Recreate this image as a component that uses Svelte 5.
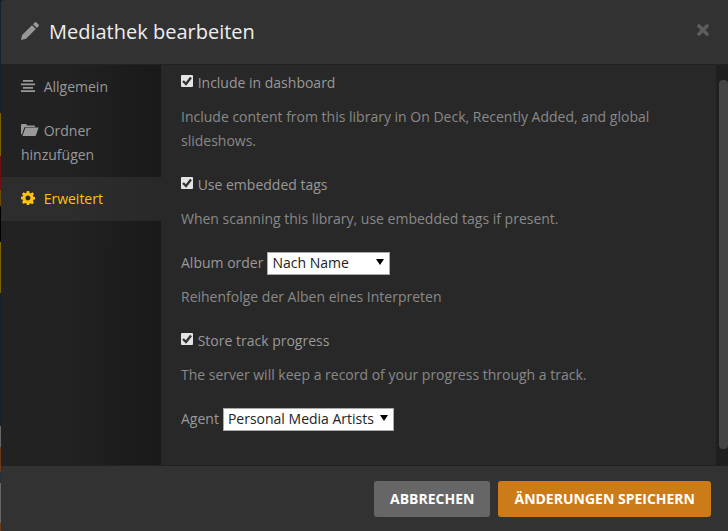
<script lang="ts">
  let active = $state('advanced');
  let dashboard = $state(true);
  let embeddedTags = $state(true);
  let trackProgress = $state(true);
  let albumOrder = $state('name');
  let agent = $state('personal');
</script>

<div class="backdrop">
  <div class="modal" role="dialog" aria-labelledby="modal-title">
    <header class="modal-header">
      <svg class="pencil" viewBox="0 0 18 18" width="18" height="18" aria-hidden="true">
        <path d="M0 18l1.2-5L11 3.2 14.8 7 5 16.8zM12 2.2l1.7-1.7q.9-.8 1.8 0l2 2q.8.9 0 1.8L15.8 6z" />
        <path d="M3.6 13.6L11.6 5.6" stroke="#888" stroke-width="0.6" />
      </svg>
      <h4 id="modal-title">Mediathek bearbeiten</h4>
      <button class="close" type="button" aria-label="Schließen">
        <svg viewBox="0 0 12 12" width="12" height="12" aria-hidden="true">
          <path d="M2 2l8 8M10 2l-8 8" stroke="currentColor" stroke-width="3.6" stroke-linecap="round" />
        </svg>
      </button>
    </header>

    <div class="modal-body">
      <nav class="sidebar">
        <a href="#general" class:selected={active === 'general'} onclick={() => (active = 'general')}>
          <svg viewBox="0 0 18 14" width="18" height="14" aria-hidden="true">
            <path d="M2 .9h10v1.800H2zM0 4.400h14v1.800H0zM2 7.900h10v1.800H2zM0 11.200h14v1.800H0z" />
          </svg>
          Allgemein
        </a>
        <a href="#folders" class:selected={active === 'folders'} onclick={() => (active = 'folders')}>
          <svg viewBox="0 0 18 14" width="18" height="14" aria-hidden="true">
            <path d="M0 11V2q0-1 1-1h4l1.5 1.5H13q1 0 1 1V4H4.3q-.8 0-1.1.8L1 11.5z" />
            <path d="M4.4 4.4H17.6L15 12.2q-.2.8-1 .8H1.4z" />
          </svg>
          Ordner hinzufügen
        </a>
        <a href="#advanced" class:selected={active === 'advanced'} onclick={() => (active = 'advanced')}>
          <svg viewBox="0 0 18 14" width="18" height="14" aria-hidden="true">
            <path
              fill-rule="evenodd"
              d="M5.8 0h2.4l.4 1.9 1.1.5 1.6-1.1 1.7 1.7-1.1 1.6.5 1.1 1.6.3v2.4l-1.7.4-.4 1.1 1 1.6-1.7 1.7-1.6-1-1.1.5L8.2 14H5.8l-.4-1.7-1.1-.4-1.6 1L1 11.2l1-1.5-.4-1.2L0 8.2V5.8l1.7-.3.4-1.1L1 2.9l1.7-1.7 1.6 1.1 1.1-.5zM7 4.5a2.5 2.5 0 1 0 0 5 2.5 2.5 0 0 0 0-5z"
            />
          </svg>
          Erweitert
        </a>
      </nav>

      <form class="settings" id="settings">
        <div class="group">
          <label><input type="checkbox" bind:checked={dashboard} /> Include in dashboard</label>
          <p>Include content from this library in On Deck, Recently Added, and global slideshows.</p>
        </div>
        <div class="group">
          <label><input type="checkbox" bind:checked={embeddedTags} /> Use embedded tags</label>
          <p>When scanning this library, use embedded tags if present.</p>
        </div>
        <div class="group">
          <div class="field">
            <label for="album-order">Album order</label>
            <span class="select">
              <select id="album-order" class="order" bind:value={albumOrder}>
                <option value="name">Nach Name</option>
                <option value="year">Nach Jahr</option>
              </select>
            </span>
          </div>
          <p>Reihenfolge der Alben eines Interpreten</p>
        </div>
        <div class="group">
          <label><input type="checkbox" bind:checked={trackProgress} /> Store track progress</label>
          <p>The server will keep a record of your progress through a track.</p>
        </div>
        <div class="group">
          <div class="field">
            <label for="agent">Agent</label>
            <span class="select">
              <select id="agent" bind:value={agent}>
                <option value="personal">Personal Media Artists</option>
              </select>
            </span>
          </div>
        </div>
      </form>

      <div class="scrollbar"><div class="thumb"></div></div>
    </div>

    <footer class="modal-footer">
      <button class="btn" type="button">Abbrechen</button>
      <button class="btn btn-primary" type="submit" form="settings">Änderungen speichern</button>
    </footer>
  </div>
</div>

<style>
  :global(body) {
    background: #323232;
  }

  /* a sliver of the dimmed library shows left of the dialog */
  .backdrop {
    padding-left: 1px;
    font: 14px/24px 'Open Sans', sans-serif;
    color: #999;
    background: linear-gradient(
      #17212a 0 113px,
      #7d5f00 113px 156px,
      #6d1010 156px 190px,
      #6d4a00 190px 206px,
      #000 206px 242px,
      #7d6400 242px 293px,
      #17212a 293px 426px,
      #666 426px 447px,
      #6b3a14 447px 472px,
      #263038 472px 483px,
      #666 483px 523px,
      #6b3a14 523px
    );
  }

  .modal {
    background: #282828;
    border-radius: 4px 0 0 0;
    overflow: hidden;
  }

  .modal-header {
    display: flex;
    align-items: center;
    height: 64px;
    padding: 0 19px 0 20px;
    background: #323232;
    border-bottom: 1px solid #222;
  }

  .modal-header h4 {
    flex: 1;
    margin: 0 0 0 10px;
    font-size: 20px;
    font-weight: 400;
    color: #eee;
  }

  svg {
    fill: currentColor;
  }

  .pencil {
    margin-bottom: 2px;
  }

  .close {
    display: flex;
    padding: 0;
    margin-bottom: 4px;
    border: 0;
    background: none;
    color: #5d5d5d;
    cursor: pointer;
  }

  .modal-body {
    display: flex;
  }

  .sidebar {
    flex: none;
    width: 160px;
    background: linear-gradient(to right, #222 40%, #191919);
  }

  .sidebar a {
    display: block;
    padding: 10px 20px;
    color: #999;
    text-decoration: none;
  }

  .sidebar a.selected {
    color: #ffc20e;
    background: linear-gradient(to right, #2d2d2d 40%, #282828);
  }

  .sidebar svg {
    margin-right: 1px;
    vertical-align: -1px;
  }

  .settings {
    flex: 1;
    padding: 6px 20px 34px;
  }

  .group + .group {
    margin-top: 20px;
  }

  .group > label {
    display: block;
  }

  .settings p {
    margin: 10px 0 0;
    color: #888;
  }

  input {
    appearance: none;
    width: 12px;
    height: 12px;
    margin: 0 1px 0 0;
    border-radius: 1px;
    background: #e4e4e4;
    vertical-align: 1px;
  }

  input:checked {
    background: #e4e4e4
      url("data:image/svg+xml,%3Csvg xmlns='http://www.w3.org/2000/svg' viewBox='0 0 12 12'%3E%3Cpath d='M2 6l3 3L10 2.5' fill='none' stroke='%23333' stroke-width='2.4'/%3E%3C/svg%3E");
  }

  .field {
    display: flex;
    align-items: center;
    gap: 4px;
  }

  .select {
    display: grid;
    align-items: center;
  }

  .select::after {
    content: '';
    grid-area: 1 / 1;
    justify-self: end;
    margin: 0 6px 2px 0;
    border: 4px solid transparent;
    border-top: 6px solid #000;
    border-bottom: 0;
    pointer-events: none;
  }

  select {
    grid-area: 1 / 1;
    appearance: none;
    height: 23px;
    padding: 0 18px 2px 4px;
    border: 1px solid #a9a9a9;
    border-radius: 0;
    background: #fff;
    color: #222;
    font: inherit;
    line-height: 19px;
  }

  .order {
    width: 123px;
  }

  .scrollbar {
    display: flex;
    flex: none;
    width: 9px;
    padding: 15px 0 16px 3px;
    background: #1f1f1f;
  }

  .thumb {
    flex: 1;
    border-radius: 4px;
    background: #444;
  }

  .modal-footer {
    display: flex;
    justify-content: flex-end;
    gap: 8px;
    padding: 15px 17px 14px;
    background: #323232;
    border-top: 1px solid #222;
  }

  .btn {
    padding: 6px 16px;
    border: 0;
    border-radius: 3px;
    background: #666;
    color: #fff;
    font: inherit;
    font-weight: 700;
    text-transform: uppercase;
    cursor: pointer;
  }

  .btn-primary {
    background: #cc7b19;
  }
</style>
